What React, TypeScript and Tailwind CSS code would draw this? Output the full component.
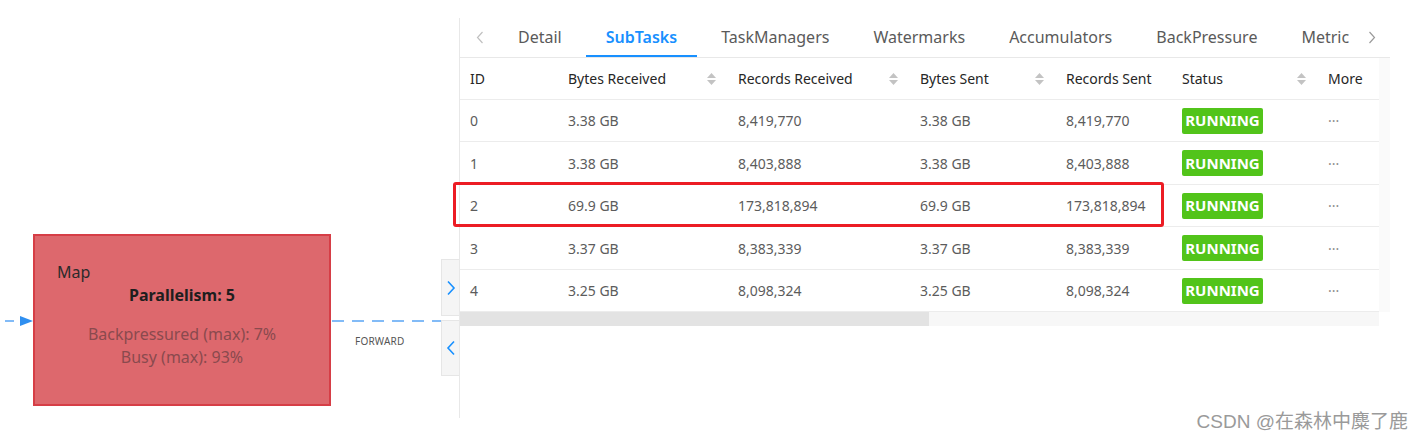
import React from "react";

const FONT = { fontFamily: '"Noto Sans", "Noto Sans CJK SC", sans-serif' };

const Sorter = () => (
  <span className="flex flex-col items-center gap-[2px]">
    <svg width="9" height="5" viewBox="0 0 9 5"><path d="M0 5 L4.5 0 L9 5 Z" fill="#c3c3c3" /></svg>
    <svg width="9" height="5" viewBox="0 0 9 5"><path d="M0 0 L4.5 5 L9 0 Z" fill="#c3c3c3" /></svg>
  </span>
);

const cols = [
  { title: "ID", w: "w-[98px]", sort: false },
  { title: "Bytes Received", w: "w-[170px]", sort: true },
  { title: "Records Received", w: "w-[182px]", sort: true },
  { title: "Bytes Sent", w: "w-[146px]", sort: true },
  { title: "Records Sent", w: "w-[116px]", sort: false },
  { title: "Status", w: "w-[146px]", sort: true },
  { title: "More", w: "w-[61px]", sort: false },
];

const rows = [
  ["0", "3.38 GB", "8,419,770", "3.38 GB", "8,419,770"],
  ["1", "3.38 GB", "8,403,888", "3.38 GB", "8,403,888"],
  ["2", "69.9 GB", "173,818,894", "69.9 GB", "173,818,894"],
  ["3", "3.37 GB", "8,383,339", "3.37 GB", "8,383,339"],
  ["4", "3.25 GB", "8,098,324", "3.25 GB", "8,098,324"],
];
const rowH = ["h-[42px]", "h-[43px]", "h-[42px]", "h-[43px]", "h-[42px]"];

const tabs = ["Detail", "SubTasks", "TaskManagers", "Watermarks", "Accumulators", "BackPressure", "Metric"];

export default function App() {
  return (
    <div className="relative flex h-[442px] w-[1422px] overflow-hidden bg-white" style={FONT}>
      {/* Graph canvas */}
      <div className="relative h-full w-[441px] shrink-0">
        <svg className="absolute left-0 top-0" width="441" height="442">
          <line x1="5" y1="321" x2="22" y2="321" stroke="#5aa5f5" strokeWidth="1.5" strokeDasharray="9 6" />
          <path d="M20 316 L33 321 L20 326 Z" fill="#2f8ff0" />
          <line x1="332" y1="321" x2="441" y2="321" stroke="#5aa5f5" strokeWidth="1.5" strokeDasharray="12 8" />
        </svg>
        <div className="absolute left-[33px] top-[234px] flex h-[172px] w-[298px] flex-col border-2 border-[#d63e46] bg-[#dd686d]">
          <div className="pl-[22px] pt-[26px] text-[16px] leading-[20px] text-[#2b2b2b]">Map</div>
          <div className="mt-[3px] text-center text-[16px] font-bold leading-[20px] text-[#1e1e1e]">Parallelism: 5</div>
          <div className="mt-[18px] text-center text-[16px] leading-[23px] text-[#8a4a4e]">
            <div>Backpressured (max): 7%</div>
            <div>Busy (max): 93%</div>
          </div>
        </div>
        <div className="absolute left-[355px] top-[334px] text-[10px] tracking-[0.2px] text-[#555]">FORWARD</div>
      </div>

      {/* Collapse buttons */}
      <div className="flex w-[18px] shrink-0 flex-col gap-[4px] pt-[259px]">
        <div className="flex h-[57px] items-center justify-center border border-r-0 border-[#e6e6e6] bg-[#f5f5f5]">
          <svg width="10" height="16" viewBox="0 0 10 16"><path d="M2 1.5 L8 8 L2 14.5" fill="none" stroke="#1890ff" strokeWidth="1.6" /></svg>
        </div>
        <div className="flex h-[56px] items-center justify-center border border-r-0 border-[#e6e6e6] bg-[#f5f5f5]">
          <svg width="10" height="16" viewBox="0 0 10 16"><path d="M8 1.5 L2 8 L8 14.5" fill="none" stroke="#1890ff" strokeWidth="1.6" /></svg>
        </div>
      </div>

      {/* Detail panel */}
      <div className="relative mt-[18px] h-[400px] w-[931px] shrink-0 border-l border-[#e8e8e8]">
        {/* Tabs */}
        <div className="relative flex h-[40px] items-center overflow-hidden border-b border-[#e8e8e8]">
          <div className="flex w-[38px] shrink-0 justify-center pl-[2px]">
            <svg width="8" height="13" viewBox="0 0 8 13"><path d="M6.5 1 L1.5 6.5 L6.5 12" fill="none" stroke="#c0c0c0" strokeWidth="1.2" /></svg>
          </div>
          <div className="flex h-full shrink-0 items-stretch gap-[4px]">
            {tabs.map((t) => (
              <div
                key={t}
                className={
                  "flex items-center px-[20px] text-[16px] " +
                  (t === "SubTasks"
                    ? "border-b-2 border-[#1890ff] font-semibold text-[#1890ff]"
                    : "border-b-2 border-transparent text-[#5a5a5a]")
                }
              >
                {t}
              </div>
            ))}
          </div>
          <div className="absolute right-[14px] top-[13px] flex bg-white">
            <svg width="8" height="13" viewBox="0 0 8 13"><path d="M1.5 1 L6.5 6.5 L1.5 12" fill="none" stroke="#9a9a9a" strokeWidth="1.2" /></svg>
          </div>
        </div>

        {/* Table */}
        <div className="flex">
          <div className="w-[919px]">
            <div className="flex h-[42px] items-center border-b border-[#ececec] text-[14px] text-[#262626]">
              {cols.map((c) => (
                <div key={c.title} className={"flex h-full items-center justify-between pl-[10px] pr-[12px] " + c.w}>
                  <span>{c.title}</span>
                  {c.sort && <Sorter />}
                </div>
              ))}
            </div>
            {rows.map((r, i) => (
              <div key={i} className={"flex items-center border-b border-[#ececec] text-[14px] text-[#5c5c5c] " + rowH[i]}>
                {r.map((v, j) => (
                  <div key={j} className={"pl-[10px] " + cols[j].w}>{v}</div>
                ))}
                <div className={"pl-[10px] " + cols[5].w}>
                  <span className="inline-flex h-[26px] w-[81px] items-center justify-center rounded-[2px] bg-[#52c41a] text-[15px] font-bold text-white">RUNNING</span>
                </div>
                <div className={"pl-[10px] text-[#8c8c8c] " + cols[6].w}>···</div>
              </div>
            ))}
            {/* Scrollbar */}
            <div className="flex h-[14px] bg-[#f7f7f7]">
              <div className="h-full w-[469px] bg-[#e3e3e3]" />
            </div>
          </div>
          <div className="h-[254px] w-[12px] bg-[#fafafa]" />
        </div>

        {/* Highlight box */}
        <div className="absolute left-[-7px] top-[164px] h-[45px] w-[711px] rounded-[3px] border-[3px] border-[#ec1c24]" />
      </div>

      {/* Watermark */}
      <div
        className="absolute bottom-[6px] right-[14px] text-[19px] text-[#9a9a9a]"
        style={{ fontFamily: '"Liberation Sans", "Noto Sans CJK SC", sans-serif' }}
      >
        CSDN @在森林中麋了鹿
      </div>
    </div>
  );
}
